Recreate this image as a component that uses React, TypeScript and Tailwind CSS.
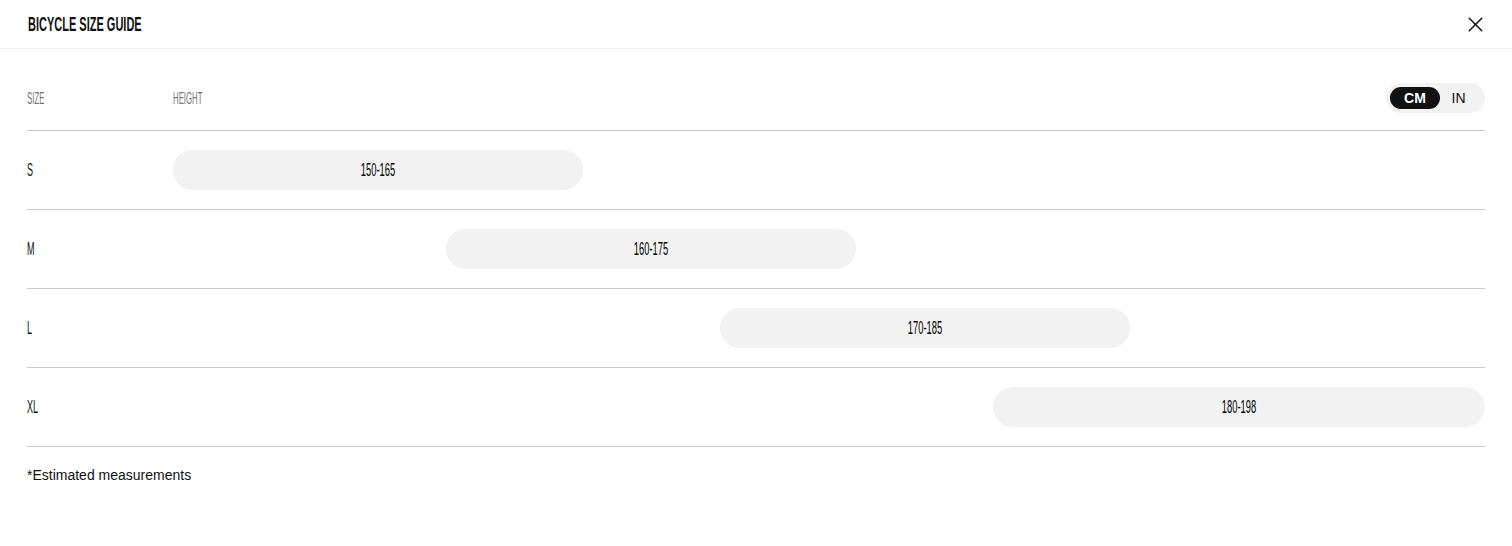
import { X } from 'lucide-react'

// no condensed face installed, so squeeze Liberation Sans horizontally
const narrow = "inline-block font-['Liberation_Sans',Arial,sans-serif] whitespace-nowrap"

const MIN = 150
const MAX = 198

const sizes = [
    { label: 'S', from: 150, to: 165 },
    { label: 'M', from: 160, to: 175 },
    { label: 'L', from: 170, to: 185 },
    { label: 'XL', from: 180, to: 198 },
]

export default function App() {
    const span = MAX - MIN

    return (
        <div className="min-h-[546px] bg-white text-[#111111] font-['Liberation_Sans',Arial,sans-serif]">
            <header className="flex h-[49px] items-center justify-between border-b border-[#f0f0f0] pl-[28px] pr-[23px]">
                <h1 className={`${narrow} origin-left scale-x-[0.55] text-[20px] leading-none font-bold uppercase`}>
                    Bicycle Size Guide
                </h1>
                <button className="flex h-7 w-7 items-center justify-center">
                    <X size={25} strokeWidth={1.4} />
                </button>
            </header>

            <div className="px-[27px] pt-[34px]">
                <div className="flex h-[48px] items-start border-b border-[#cacaca]">
                    <div className="w-[146px] pt-[3px]">
                        <span className={`${narrow} origin-left scale-x-[0.46] text-[17px] text-[#757575] uppercase`}>Size</span>
                    </div>
                    <div className="flex-1 pt-[3px]">
                        <span className={`${narrow} origin-left scale-x-[0.46] text-[17px] text-[#757575] uppercase`}>Height</span>
                    </div>
                    <div className="flex h-[30px] items-center rounded-full bg-[#f2f2f2] p-[4px]">
                        <span className="flex h-[22px] w-[50px] items-center justify-center rounded-full bg-[#111111] text-[14px] font-bold text-white">
                            CM
                        </span>
                        <span className="flex h-[22px] w-[41px] items-center justify-center pr-[4px] text-[14px] font-medium">
                            IN
                        </span>
                    </div>
                </div>

                {sizes.map((size) => (
                    <div key={size.label} className="flex h-[79px] items-center border-b border-[#cacaca]">
                        <div className="w-[146px]">
                            <span className={`${narrow} origin-left scale-x-[0.5] text-[18px]`}>{size.label}</span>
                        </div>
                        <div className="flex-1">
                            <div
                                className="flex h-[40px] items-center justify-center rounded-full bg-[#f2f2f2]"
                                style={{
                                    marginLeft: `${((size.from - MIN) / span) * 100}%`,
                                    width: `${((size.to - size.from) / span) * 100}%`,
                                }}
                            >
                                <span className={`${narrow} scale-x-[0.52] text-[18px] text-black`}>
                                    {size.from}-{size.to}
                                </span>
                            </div>
                        </div>
                    </div>
                ))}

                <p className="pt-[18px] text-[14px]">*Estimated measurements</p>
            </div>
        </div>
    )
}
